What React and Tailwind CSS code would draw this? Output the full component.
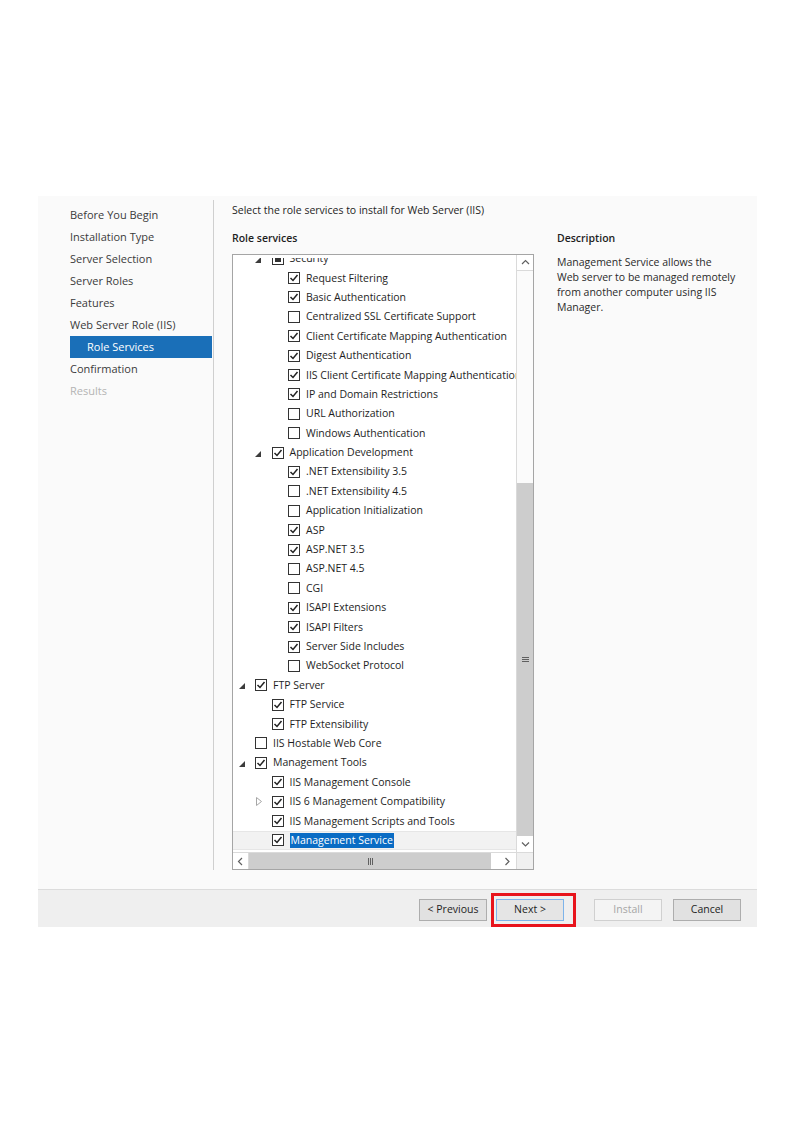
import React from 'react';

const navItems = [
  { label: 'Before You Begin' },
  { label: 'Installation Type' },
  { label: 'Server Selection' },
  { label: 'Server Roles' },
  { label: 'Features' },
  { label: 'Web Server Role (IIS)' },
  { label: 'Role Services', active: true },
  { label: 'Confirmation' },
  { label: 'Results', disabled: true },
];

// lvl: tree depth, exp: 'open' | 'closed' | undefined, chk: true | false | 'part'
const rows = [
  { lvl: 2, exp: 'open', chk: 'part', label: 'Security' },
  { lvl: 3, chk: true, label: 'Request Filtering' },
  { lvl: 3, chk: true, label: 'Basic Authentication' },
  { lvl: 3, chk: false, label: 'Centralized SSL Certificate Support' },
  { lvl: 3, chk: true, label: 'Client Certificate Mapping Authentication' },
  { lvl: 3, chk: true, label: 'Digest Authentication' },
  { lvl: 3, chk: true, label: 'IIS Client Certificate Mapping Authentication' },
  { lvl: 3, chk: true, label: 'IP and Domain Restrictions' },
  { lvl: 3, chk: false, label: 'URL Authorization' },
  { lvl: 3, chk: false, label: 'Windows Authentication' },
  { lvl: 2, exp: 'open', chk: true, label: 'Application Development' },
  { lvl: 3, chk: true, label: '.NET Extensibility 3.5' },
  { lvl: 3, chk: false, label: '.NET Extensibility 4.5' },
  { lvl: 3, chk: false, label: 'Application Initialization' },
  { lvl: 3, chk: true, label: 'ASP' },
  { lvl: 3, chk: true, label: 'ASP.NET 3.5' },
  { lvl: 3, chk: false, label: 'ASP.NET 4.5' },
  { lvl: 3, chk: false, label: 'CGI' },
  { lvl: 3, chk: true, label: 'ISAPI Extensions' },
  { lvl: 3, chk: true, label: 'ISAPI Filters' },
  { lvl: 3, chk: true, label: 'Server Side Includes' },
  { lvl: 3, chk: false, label: 'WebSocket Protocol' },
  { lvl: 1, exp: 'open', chk: true, label: 'FTP Server' },
  { lvl: 2, chk: true, label: 'FTP Service' },
  { lvl: 2, chk: true, label: 'FTP Extensibility' },
  { lvl: 1, chk: false, label: 'IIS Hostable Web Core' },
  { lvl: 1, exp: 'open', chk: true, label: 'Management Tools' },
  { lvl: 2, chk: true, label: 'IIS Management Console' },
  { lvl: 2, exp: 'closed', chk: true, label: 'IIS 6 Management Compatibility' },
  { lvl: 2, chk: true, label: 'IIS Management Scripts and Tools' },
  { lvl: 2, chk: true, label: 'Management Service', selected: true },
];

const indent = { 1: 'pl-[4px]', 2: 'pl-[20.5px]', 3: 'pl-[37px]' };

function Expander({ state }) {
  if (state === 'open') {
    return (
      <svg width="6" height="6" viewBox="0 0 6 6" className="ml-[1.5px] mt-[2px]">
        <polygon points="6,0 6,6 0,6" fill="#3c3c3c" />
      </svg>
    );
  }
  if (state === 'closed') {
    return (
      <svg width="6" height="9" viewBox="0 0 6 9" className="ml-[2px]">
        <polygon points="0.5,0.5 5.5,4.5 0.5,8.5" fill="none" stroke="#a6a6a6" strokeWidth="1" />
      </svg>
    );
  }
  return null;
}

function Checkbox({ value }) {
  return (
    <span className="w-[12px] h-[12px] border border-[#333] bg-white flex items-center justify-center shrink-0">
      {value === true && (
        <svg width="10" height="10" viewBox="0 0 10 10">
          <polyline points="1.5,5 4,7.5 8.5,2" fill="none" stroke="#222" strokeWidth="1.5" />
        </svg>
      )}
      {value === 'part' && <span className="w-[6px] h-[6px] bg-[#333]" />}
    </span>
  );
}

function TreeRow({ row }) {
  return (
    <div
      className={`h-[19.4px] flex items-center whitespace-nowrap ${indent[row.lvl]} ${
        row.selected ? 'bg-[#f2f2f2] border-y border-[#e6e6e6]' : ''
      }`}
    >
      <span className="w-[18px] shrink-0 flex items-center">
        <Expander state={row.exp} />
      </span>
      <Checkbox value={row.chk} />
      <span
        className={`ml-[6px] leading-[15px] ${
          row.selected ? 'bg-[#0a6cc4] text-white px-[1px] -ml-[1px]' : ''
        }`}
      >
        {row.label}
      </span>
    </div>
  );
}

function Chevron({ dir }) {
  const pts = {
    up: '1,5 4.5,1.5 8,5',
    down: '1,1.5 4.5,5 8,1.5',
    left: '5,1 1.5,4.5 5,8',
    right: '1.5,1 5,4.5 1.5,8',
  }[dir];
  const horiz = dir === 'left' || dir === 'right';
  return (
    <svg width={horiz ? 7 : 9} height={horiz ? 9 : 7} viewBox={horiz ? '0 0 7 9' : '0 0 9 7'}>
      <polyline points={pts} fill="none" stroke="#606060" strokeWidth="1.2" />
    </svg>
  );
}

function WinButton({ children, variant }) {
  const styles = {
    normal: 'bg-[#e1e1e1] border-[#adadad] text-[#1e1e1e]',
    focus: 'bg-[#e5e5e5] border-[#7eb4ea] text-[#1e1e1e]',
    disabled: 'bg-[#f4f4f4] border-[#d0d0d0] text-[#a6a6a6]',
  }[variant || 'normal'];
  return (
    <button className={`w-[68px] h-[22px] border text-[10.5px] flex items-center justify-center ${styles}`}>
      {children}
    </button>
  );
}

export default function App() {
  return (
    <div className="w-[794px] h-[1123px] bg-white pt-[196px] pl-[38px] font-['Open_Sans',sans-serif] text-[10.5px] text-[#1e1e1e]">
      <div className="w-[719px] bg-[#fafafa] flex flex-col relative">
        {/* Main area */}
        <div className="h-[693px] flex">
          {/* Wizard steps */}
          <nav className="w-[175px] pt-[8px] flex flex-col text-[11px]">
            {navItems.map((item) => (
              <div
                key={item.label}
                className={`ml-[32px] w-[142px] h-[22px] flex items-center ${
                  item.active
                    ? 'bg-[#1a6fb8] text-white pl-[17px]'
                    : item.disabled
                    ? 'text-[#b4b4b4]'
                    : 'text-[#3a3a3a]'
                }`}
              >
                {item.label}
              </div>
            ))}
          </nav>
          <div className="w-px bg-[#cfcfcf] mt-[4px] mb-[19px]" />

          {/* Content */}
          <div className="flex-1 pl-[18px] flex flex-col">
            <div className="h-[16px] mt-[7px] flex items-center">
              Select the role services to install for Web Server (IIS)
            </div>
            <div className="flex mt-[12px]">
              <div className="w-[302px] flex flex-col">
                <div className="h-[16px] flex items-center font-semibold">Role services</div>
                <div className="mt-[7px] h-[616px] border border-[#a5a5a5] bg-white flex flex-col">
                  <div className="flex-1 flex min-h-0">
                    <div className="flex-1 min-w-0 pt-[3px] flex flex-col">
                      <div className="flex-1 overflow-hidden">
                        <div className="-mt-[9px]">
                          {rows.map((row) => (
                            <TreeRow key={row.label} row={row} />
                          ))}
                        </div>
                      </div>
                    </div>
                    {/* Vertical scrollbar */}
                    <div className="w-[17px] shrink-0 border-l border-[#dadada] flex flex-col bg-[#fbfbfb]">
                      <div className="h-[16px] border-b border-[#dadada] bg-white flex items-center justify-center">
                        <Chevron dir="up" />
                      </div>
                      <div className="h-[212px]" />
                      <div className="flex-1 bg-[#cdcdcd] flex items-center justify-center">
                        <svg width="7" height="7" viewBox="0 0 7 7">
                          <path d="M0 1.5H7M0 3.5H7M0 5.5H7" stroke="#606060" strokeWidth="1" />
                        </svg>
                      </div>
                      <div className="h-[16px] bg-white flex items-center justify-center">
                        <Chevron dir="down" />
                      </div>
                    </div>
                  </div>
                  {/* Horizontal scrollbar */}
                  <div className="h-[17px] flex border-t border-[#dadada] bg-[#fbfbfb]">
                    <div className="w-[16px] bg-white border-r border-[#dadada] flex items-center justify-center">
                      <Chevron dir="left" />
                    </div>
                    <div className="w-[242px] bg-[#cdcdcd] flex items-center justify-center">
                      <svg width="7" height="7" viewBox="0 0 7 7">
                        <path d="M1.5 0V7M3.5 0V7M5.5 0V7" stroke="#606060" strokeWidth="1" />
                      </svg>
                    </div>
                    <div className="w-[8px] bg-white" />
                    <div className="w-[17px] bg-white flex items-center justify-center">
                      <Chevron dir="right" />
                    </div>
                    <div className="flex-1 bg-[#f0f0f0] border-l border-[#dadada]" />
                  </div>
                </div>
              </div>

              <div className="ml-[23px] w-[190px] flex flex-col">
                <div className="h-[16px] flex items-center font-semibold">Description</div>
                <p className="mt-[8px] leading-[15px] text-[#2a2a2a] whitespace-nowrap">
                  Management Service allows the
                  <br />
                  Web server to be managed remotely
                  <br />
                  from another computer using IIS
                  <br />
                  Manager.
                </p>
              </div>
            </div>
          </div>
        </div>

        {/* Button bar */}
        <div className="h-[38px] bg-[#efefef] border-t border-[#dcdcdc] flex items-start justify-end pt-[9px] pr-[16px]">
          <WinButton>&lt; Previous</WinButton>
          <div className="ml-[9px]">
            <WinButton variant="focus">Next &gt;</WinButton>
          </div>
          <div className="ml-[30px]">
            <WinButton variant="disabled">Install</WinButton>
          </div>
          <div className="ml-[11px]">
            <WinButton>Cancel</WinButton>
          </div>
        </div>

        {/* Red highlight around Next */}
        <div className="absolute left-[453px] top-[697px] w-[85px] h-[34px] border-[3px] border-[#e8141c]" />
      </div>
    </div>
  );
}
